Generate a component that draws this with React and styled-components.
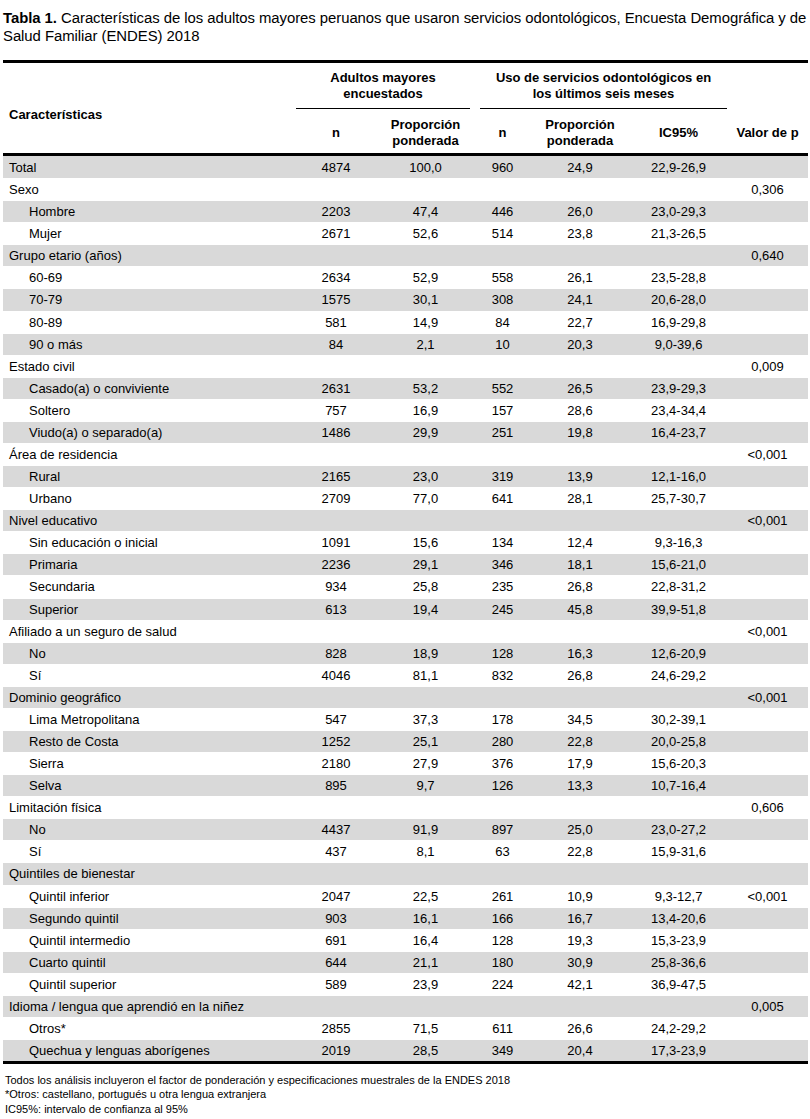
import React from 'react';
import styled, { createGlobalStyle } from 'styled-components';

const GlobalStyle = createGlobalStyle`
  html, body {
    margin: 0;
    padding: 0;
    background: #fff;
  }
  body {
    font-family: "Liberation Sans", Arial, sans-serif;
    color: #000;
  }
`

const Page = styled.div`
  width: 810px;
  padding: 9px 0 0 3px;
  box-sizing: border-box;
`

const Title = styled.p`
  margin: 0 0 15px 0;
  font-size: 14.9px;
  line-height: 18px;
  letter-spacing: -0.05px;
  b {
    font-weight: bold;
  }
`

const Table = styled.table`
  width: 805px;
  border-collapse: collapse;
  table-layout: fixed;
  font-size: 13px;
  border-top: 3px solid #000;
  border-bottom: 3px solid #000;
`

const Head = styled.thead`
  border-bottom: 3px solid #000;
`

const Th = styled.th`
  font-weight: bold;
  text-align: ${p => (p.left ? 'left' : 'center')};
  vertical-align: ${p => p.valign || 'middle'};
  line-height: 16px;
  padding: ${p => p.pad || '0'};
  height: ${p => p.h || 'auto'};
`

const GroupLine = styled.div`
  border-bottom: 1px solid #000;
  margin: ${p => p.margin};
  padding: 7px 0 6px;
`

const Row = styled.tr`
  background: ${p => (p.shade ? '#d9d9d9' : '#fff')};
  box-shadow: inset 0 1px 0 #fff;
`

const Label = styled.td`
  height: ${p => p.h}px;
  padding: 0 0 0 ${p => (p.sub ? '26px' : '6px')};
  white-space: nowrap;
  vertical-align: middle;
`

const Num = styled.td`
  text-align: center;
  vertical-align: middle;
  padding: 0;
`

const Notes = styled.div`
  margin-top: 9px;
  font-size: 11px;
  line-height: 14px;
  padding-left: 2px;
`

const NoteLine = styled.div`
  margin-top: ${p => p.gap || '0'};
`

const rows = [
  ['Total', 0, '4874', '100,0', '960', '24,9', '22,9-26,9', ''],
  ['Sexo', 0, '', '', '', '', '', '0,306'],
  ['Hombre', 1, '2203', '47,4', '446', '26,0', '23,0-29,3', ''],
  ['Mujer', 1, '2671', '52,6', '514', '23,8', '21,3-26,5', ''],
  ['Grupo etario (años)', 0, '', '', '', '', '', '0,640'],
  ['60-69', 1, '2634', '52,9', '558', '26,1', '23,5-28,8', ''],
  ['70-79', 1, '1575', '30,1', '308', '24,1', '20,6-28,0', ''],
  ['80-89', 1, '581', '14,9', '84', '22,7', '16,9-29,8', ''],
  ['90 o más', 1, '84', '2,1', '10', '20,3', '9,0-39,6', ''],
  ['Estado civil', 0, '', '', '', '', '', '0,009'],
  ['Casado(a) o conviviente', 1, '2631', '53,2', '552', '26,5', '23,9-29,3', ''],
  ['Soltero', 1, '757', '16,9', '157', '28,6', '23,4-34,4', ''],
  ['Viudo(a) o separado(a)', 1, '1486', '29,9', '251', '19,8', '16,4-23,7', ''],
  ['Área de residencia', 0, '', '', '', '', '', '<0,001'],
  ['Rural', 1, '2165', '23,0', '319', '13,9', '12,1-16,0', ''],
  ['Urbano', 1, '2709', '77,0', '641', '28,1', '25,7-30,7', ''],
  ['Nivel educativo', 0, '', '', '', '', '', '<0,001'],
  ['Sin educación o inicial', 1, '1091', '15,6', '134', '12,4', '9,3-16,3', ''],
  ['Primaria', 1, '2236', '29,1', '346', '18,1', '15,6-21,0', ''],
  ['Secundaria', 1, '934', '25,8', '235', '26,8', '22,8-31,2', ''],
  ['Superior', 1, '613', '19,4', '245', '45,8', '39,9-51,8', ''],
  ['Afiliado a un seguro de salud', 0, '', '', '', '', '', '<0,001'],
  ['No', 1, '828', '18,9', '128', '16,3', '12,6-20,9', ''],
  ['Sí', 1, '4046', '81,1', '832', '26,8', '24,6-29,2', ''],
  ['Dominio geográfico', 0, '', '', '', '', '', '<0,001'],
  ['Lima Metropolitana', 1, '547', '37,3', '178', '34,5', '30,2-39,1', ''],
  ['Resto de Costa', 1, '1252', '25,1', '280', '22,8', '20,0-25,8', ''],
  ['Sierra', 1, '2180', '27,9', '376', '17,9', '15,6-20,3', ''],
  ['Selva', 1, '895', '9,7', '126', '13,3', '10,7-16,4', ''],
  ['Limitación física', 0, '', '', '', '', '', '0,606'],
  ['No', 1, '4437', '91,9', '897', '25,0', '23,0-27,2', ''],
  ['Sí', 1, '437', '8,1', '63', '22,8', '15,9-31,6', ''],
  ['Quintiles de bienestar', 0, '', '', '', '', '', ''],
  ['Quintil inferior', 1, '2047', '22,5', '261', '10,9', '9,3-12,7', '<0,001'],
  ['Segundo quintil', 1, '903', '16,1', '166', '16,7', '13,4-20,6', ''],
  ['Quintil intermedio', 1, '691', '16,4', '128', '19,3', '15,3-23,9', ''],
  ['Cuarto quintil', 1, '644', '21,1', '180', '30,9', '25,8-36,6', ''],
  ['Quintil superior', 1, '589', '23,9', '224', '42,1', '36,9-47,5', ''],
  ['Idioma / lengua que aprendió en la niñez', 0, '', '', '', '', '', '0,005'],
  ['Otros*', 1, '2855', '71,5', '611', '26,6', '24,2-29,2', ''],
  ['Quechua y lenguas aborígenes', 1, '2019', '28,5', '349', '20,4', '17,3-23,9', ''],
];

// the printed rows are a shade over 22px; spread the extra pixels evenly
const rowHeight = i => (i % 13 === 6 ? 23 : 22);

function App() {
  return (
    <Page>
      <GlobalStyle />
      <Title>
        <b>Tabla 1.</b> Características de los adultos mayores peruanos que usaron servicios odontológicos, Encuesta Demográfica y de Salud Familiar (ENDES) 2018
      </Title>
      <Table>
        <colgroup>
          <col style={{ width: 293 }} />
          <col style={{ width: 80 }} />
          <col style={{ width: 99 }} />
          <col style={{ width: 55 }} />
          <col style={{ width: 100 }} />
          <col style={{ width: 97 }} />
          <col style={{ width: 81 }} />
        </colgroup>
        <Head>
          <tr>
            <Th left rowSpan={2} pad="13px 0 0 6px">Características</Th>
            <Th colSpan={2} valign="top">
              <GroupLine margin="0 5px 0 0">Adultos mayores<br />encuestados</GroupLine>
            </Th>
            <Th colSpan={3} valign="top">
              <GroupLine margin="0 0 0 5px">Uso de servicios odontológicos en<br />los últimos seis meses</GroupLine>
            </Th>
            <Th />
          </tr>
          <tr>
            <Th h="41px" pad="3px 0 0">n</Th>
            <Th pad="3px 0 0">Proporción<br />ponderada</Th>
            <Th pad="3px 0 0">n</Th>
            <Th pad="3px 0 0">Proporción<br />ponderada</Th>
            <Th pad="3px 0 0">IC95%</Th>
            <Th pad="3px 0 0">Valor de p</Th>
          </tr>
        </Head>
        <tbody>
          {rows.map((r, i) => (
            <Row key={i} shade={i % 2 === 0}>
              <Label sub={r[1] === 1} h={rowHeight(i)}>{r[0]}</Label>
              <Num>{r[2]}</Num>
              <Num>{r[3]}</Num>
              <Num>{r[4]}</Num>
              <Num>{r[5]}</Num>
              <Num>{r[6]}</Num>
              <Num>{r[7]}</Num>
            </Row>
          ))}
        </tbody>
      </Table>
      <Notes>
        <NoteLine>Todos los análisis incluyeron el factor de ponderación y especificaciones muestrales de la ENDES 2018</NoteLine>
        <NoteLine>*Otros: castellano, portugués u otra lengua extranjera</NoteLine>
        <NoteLine gap="1px">IC95%: intervalo de confianza al 95%</NoteLine>
      </Notes>
    </Page>
  );
}

export default App;
